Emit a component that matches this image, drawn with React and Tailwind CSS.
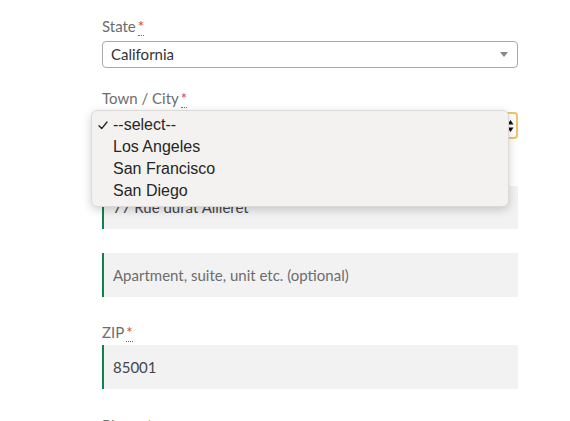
import React from 'react'

const Req = () => (
  <abbr className="text-[#e2401c] no-underline ml-[2px] border-b border-dotted border-[#e2401c] leading-none" title="required">*</abbr>
)

const Label = ({ children, required }) => (
  <label className="block h-5 text-[15px] leading-5 text-[#6d6d6d]">
    {children}
    {required && <Req />}
  </label>
)

const TextField = ({ value, placeholder, short }) => (
  <div className={`${short ? 'h-[43px]' : 'h-[44px]'} bg-[#f2f2f2] border-l-2 border-[#0f834d] flex items-center pl-[9px] text-[15px]`}>
    {value ? (
      <span className="text-[#43454b]">{value}</span>
    ) : (
      <span className="text-[#6d6d6d]">{placeholder}</span>
    )}
  </div>
)

export default function App() {
  const cities = ['--select--', 'Los Angeles', 'San Francisco', 'San Diego']

  return (
    <div className="relative w-[570px] h-[421px] bg-white overflow-hidden font-['Lato',sans-serif]">
      <div className="ml-[102px] w-[416px] pt-[16px]">
        <Label required>State</Label>
        <div className="mt-[5px] h-[27px] border border-[#aaaaaa] rounded-[4px] bg-white flex items-center justify-between pl-[8px] pr-[9px]">
          <span className="text-[15px] text-[#333]">California</span>
          <span className="w-0 h-0 border-l-[4px] border-r-[4px] border-t-[5px] border-l-transparent border-r-transparent border-t-[#888]" />
        </div>

        <div className="mt-[20px]">
          <Label required>Town / City</Label>
        </div>
        <div className="mt-[4px] h-[27px] border-2 border-[#f3c463] rounded-[4px] bg-white flex items-center justify-end pr-[2px]">
          <svg width="7" height="14" viewBox="0 0 7 14">
            <path d="M3.5 1 L6.5 5.5 H0.5 Z M3.5 13 L6.5 8.5 H0.5 Z" fill="#111" />
          </svg>
        </div>

        <div className="mt-[23px]">
          <Label required>Street address</Label>
        </div>
        <div className="mt-[4px]">
          <TextField value="77 Rue durat Allieret" short />
        </div>

        <div className="mt-[24px]">
          <TextField placeholder="Apartment, suite, unit etc. (optional)" />
        </div>

        <div className="mt-[25px]">
          <Label required>ZIP</Label>
        </div>
        <div className="mt-[3px]">
          <TextField value="85001" />
        </div>

        <div className="mt-[26px]">
          <Label required>Phone</Label>
        </div>
      </div>

      <div className="absolute left-[91px] top-[110px] w-[418px] h-[97px] bg-[#f4f2f0] rounded-[6px] border border-[#dcd9d6] shadow-[0_3px_10px_rgba(0,0,0,0.18)] pt-[3px] font-['Liberation_Sans',sans-serif]">
        {cities.map((c, i) => (
          <div key={c} className="relative h-[22px] flex items-center pl-[21px] text-[16px] text-[#262626]">
            {i === 0 && (
              <svg className="absolute left-[6px] top-[7px]" width="10" height="9" viewBox="0 0 10 9">
                <path d="M1 4.8 L3.7 7.6 L9 1" fill="none" stroke="#262626" strokeWidth="1.4" strokeLinecap="round" strokeLinejoin="round" />
              </svg>
            )}
            {c}
          </div>
        ))}
      </div>
    </div>
  )
}
